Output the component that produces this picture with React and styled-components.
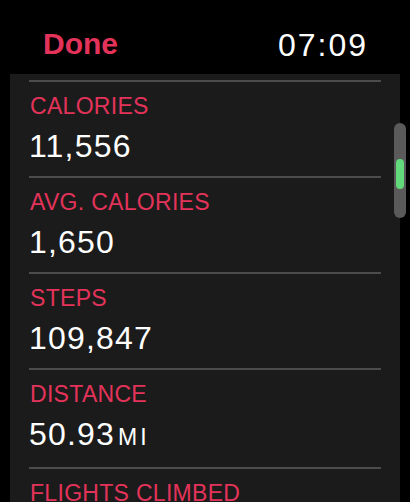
import React from "react";
import styled, { createGlobalStyle } from "styled-components";

const GlobalStyle = createGlobalStyle`
  html, body {
    margin: 0;
    padding: 0;
    background: #000;
  }
  body {
    font-family: "Liberation Sans", Arial, sans-serif;
    overflow: hidden;
  }
`;

const Screen = styled.div`
  position: relative;
  width: 410px;
  height: 502px;
  background: #000;
  overflow: hidden;
  display: flex;
  flex-direction: column;
`;

const Header = styled.header`
  height: 74px;
  flex-shrink: 0;
  display: flex;
  align-items: flex-start;
  justify-content: space-between;
  padding: 0 42px 0 43px;
  box-sizing: border-box;
`;

const DoneButton = styled.button`
  margin-top: 27px;
  padding: 0;
  border: 0;
  background: none;
  font-family: "Liberation Sans", Arial, sans-serif;
  font-weight: 700;
  font-size: 30px;
  line-height: 34px;
  color: #e4335a;
`;

const Clock = styled.div`
  margin-top: 27px;
  font-size: 32px;
  line-height: 36px;
  letter-spacing: 2px;
  color: #fff;
`;

const Panel = styled.section`
  flex: 1;
  margin: 0 10px;
  padding: 6px 19px 0 19px;
  background: #1b1b1b;
`;

const Row = styled.div`
  border-top: 2px solid #4c4c4c;
  padding: 11px 0 12px 0;
`;

const Label = styled.div`
  font-size: 23px;
  line-height: 26px;
  letter-spacing: 0.3px;
  color: #e4335a;
  margin-left: 1px;
  white-space: nowrap;
`;

const Value = styled.div`
  margin-top: 9px;
  font-size: 32px;
  line-height: 36px;
  letter-spacing: 1.2px;
  color: #fff;
`;

const Unit = styled.span`
  font-size: 23px;
  letter-spacing: 3px;
  margin-left: 3px;
`;

const ScrollTrack = styled.div`
  position: absolute;
  left: 394px;
  top: 123px;
  width: 12px;
  height: 95px;
  border-radius: 6px;
  background: #5a5a5a;
`;

const ScrollThumb = styled.div`
  position: absolute;
  left: 2px;
  top: 36px;
  width: 8px;
  height: 30px;
  border-radius: 4px;
  background: #62d97a;
`;

const stats = [
  { label: "CALORIES", value: "11,556" },
  { label: "AVG. CALORIES", value: "1,650" },
  { label: "STEPS", value: "109,847" },
  { label: "DISTANCE", value: "50.93", unit: "MI" },
  { label: "FLIGHTS CLIMBED", value: "212" }
];

const App = () => {
  return (
    <>
      <GlobalStyle />
      <Screen>
        <Header>
          <DoneButton>Done</DoneButton>
          <Clock>07:09</Clock>
        </Header>
        <Panel>
          {stats.map(stat => (
            <Row key={stat.label}>
              <Label>{stat.label}</Label>
              <Value>
                {stat.value}
                {stat.unit && <Unit>{stat.unit}</Unit>}
              </Value>
            </Row>
          ))}
        </Panel>
        <ScrollTrack>
          <ScrollThumb />
        </ScrollTrack>
      </Screen>
    </>
  );
};

export default App;
